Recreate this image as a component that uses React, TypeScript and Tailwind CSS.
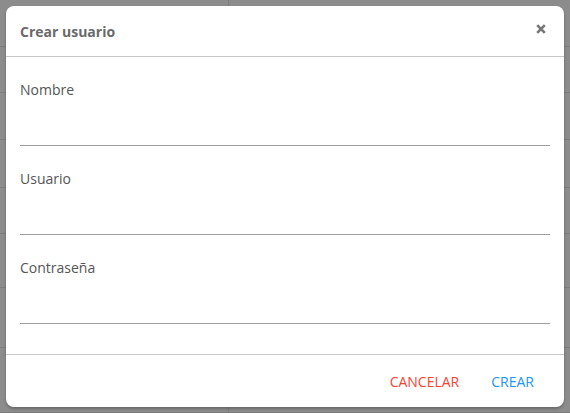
import React from "react";

const rows = [47, 46, 47, 48, 46, 54, 60, 65];

export default function App() {
  return (
    <div
      className="relative w-[570px] h-[413px] overflow-hidden bg-[#8c8c8c]"
      style={{ fontFamily: '"Open Sans", "Liberation Sans", sans-serif' }}
    >
      {/* background table */}
      <div className="flex flex-col">
        {rows.map((h, i) => (
          <div key={i} className="flex border-b border-[#7d7d7d]" style={{ height: h }}>
            <div className="w-[229px] border-r border-[#7d7d7d]" />
            <div className="flex-1" />
          </div>
        ))}
      </div>

      {/* modal */}
      <div className="absolute left-[6px] top-[6px] w-[558px] h-[401px] bg-white rounded-[8px] shadow-[0_2px_3px_rgba(0,0,0,0.25)] flex flex-col">
        <div className="h-[51px] flex items-center justify-between pl-[14px] pr-[18px] border-b border-[#c8c8c8] shrink-0">
          <span className="text-[14px] font-bold text-[#6a6a6a]">Crear usuario</span>
          <svg width="10" height="10" viewBox="0 0 10 10" className="mb-[4px]">
            <path d="M1.2 1.2 L8.8 8.8 M8.8 1.2 L1.2 8.8" stroke="#777" strokeWidth="2.6" strokeLinecap="butt" />
          </svg>
        </div>
        <div className="flex-1 flex flex-col px-[14px] pt-[23px]">
          {["Nombre", "Usuario", "Contraseña"].map((l) => (
            <div key={l} className="flex flex-col mb-[23px]">
              <label className="text-[14px] leading-[20px] text-[#555]">{l}</label>
              <div className="h-[46px] border-b border-[#9e9e9e]" />
            </div>
          ))}
        </div>
        <div className="h-[53px] border-t border-[#c8c8c8] flex items-center justify-end pr-[30px] gap-[32px] shrink-0">
          <button className="text-[14px] text-[#f44336] uppercase">Cancelar</button>
          <button className="text-[14px] text-[#2196f3] uppercase">Crear</button>
        </div>
      </div>
    </div>
  );
}
